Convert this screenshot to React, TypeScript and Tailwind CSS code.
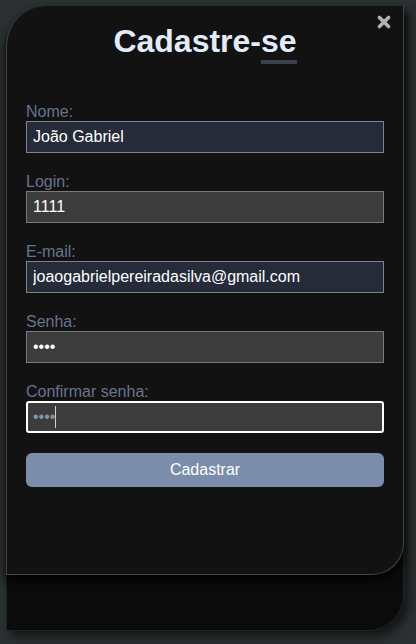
import React from "react";

const Field = ({
  label,
  value,
  type = "text",
  variant,
}: {
  label: string;
  value: string;
  type?: string;
  variant: "navy" | "gray";
}) => {
  const styles =
    variant === "navy"
      ? "bg-[#252b39] border border-[#7e828b] text-white"
      : "bg-[#3c3c3c] border border-[#7a7a7a] text-white";
  return (
    <div className="flex flex-col">
      <label className="text-[16px] leading-[18px] text-[#66758c]">{label}</label>
      <input
        readOnly
        type={type}
        defaultValue={value}
        className={`block w-full h-[32px] px-[6px] text-[16px] outline-none ${styles}`}
      />
    </div>
  );
};

export default function App() {
  return (
    <div className="w-[416px] h-[644px] bg-[#2b3032] pt-[6px] pl-[6px] font-['Liberation_Sans',Arial,sans-serif]">
      <div className="w-[398px] h-[625px] bg-[#0b0b0b] rounded-tl-[40px] rounded-br-[36px] border border-[#232323] shadow-[5px_6px_10px_rgba(0,0,0,0.55)]">
        <div className="relative h-[569px] -mt-px -ml-px w-[398px] bg-[#121212] rounded-tl-[40px] rounded-br-[32px] border-l border-r border-b border-[#454545] shadow-[0_6px_10px_rgba(0,0,0,0.85)] px-[19px] pt-[17px]">
          <button className="absolute top-[9px] right-[12px] w-[14px] h-[14px] flex items-center justify-center">
            <svg width="14" height="14" viewBox="0 0 14 14">
              <path d="M2.5 2.5 L11.5 11.5 M11.5 2.5 L2.5 11.5" stroke="#b3b3b3" strokeWidth="3.6" strokeLinecap="round" />
            </svg>
          </button>
          <h1 className="text-center text-[32px] leading-[37px] font-bold text-[#e2ecf9]">
            Cadastre-
            <span className="relative inline-block">
              se
              <span className="absolute left-0 right-0 top-[37px] h-[4px] bg-[#3a404c]" />
            </span>
          </h1>
          <form className="mt-[43px] flex flex-col gap-[20px]">
            <Field label="Nome:" value="João Gabriel" variant="navy" />
            <Field label="Login:" value="1111" variant="gray" />
            <Field label="E-mail:" value="joaogabrielpereiradasilva@gmail.com" variant="navy" />
            <Field label="Senha:" value="1111" type="password" variant="gray" />
            <div className="flex flex-col">
              <label className="text-[16px] leading-[18px] text-[#66758c]">Confirmar senha:</label>
              <div className="relative">
                <input
                  readOnly
                  type="password"
                  defaultValue="1111"
                  className="block w-full h-[32px] px-[5px] text-[16px] outline-none bg-[#3c3c3c] border-2 border-white rounded-[3px] text-[#8494ad]"
                />
                <span className="absolute left-[29px] top-[5px] w-px h-[22px] bg-[#cfcfcf]" />
              </div>
            </div>
            <button
              type="button"
              className="h-[34px] w-full rounded-[6px] bg-[#7a8dab] text-white text-[16px]"
            >
              Cadastrar
            </button>
          </form>
        </div>
      </div>
    </div>
  );
}
